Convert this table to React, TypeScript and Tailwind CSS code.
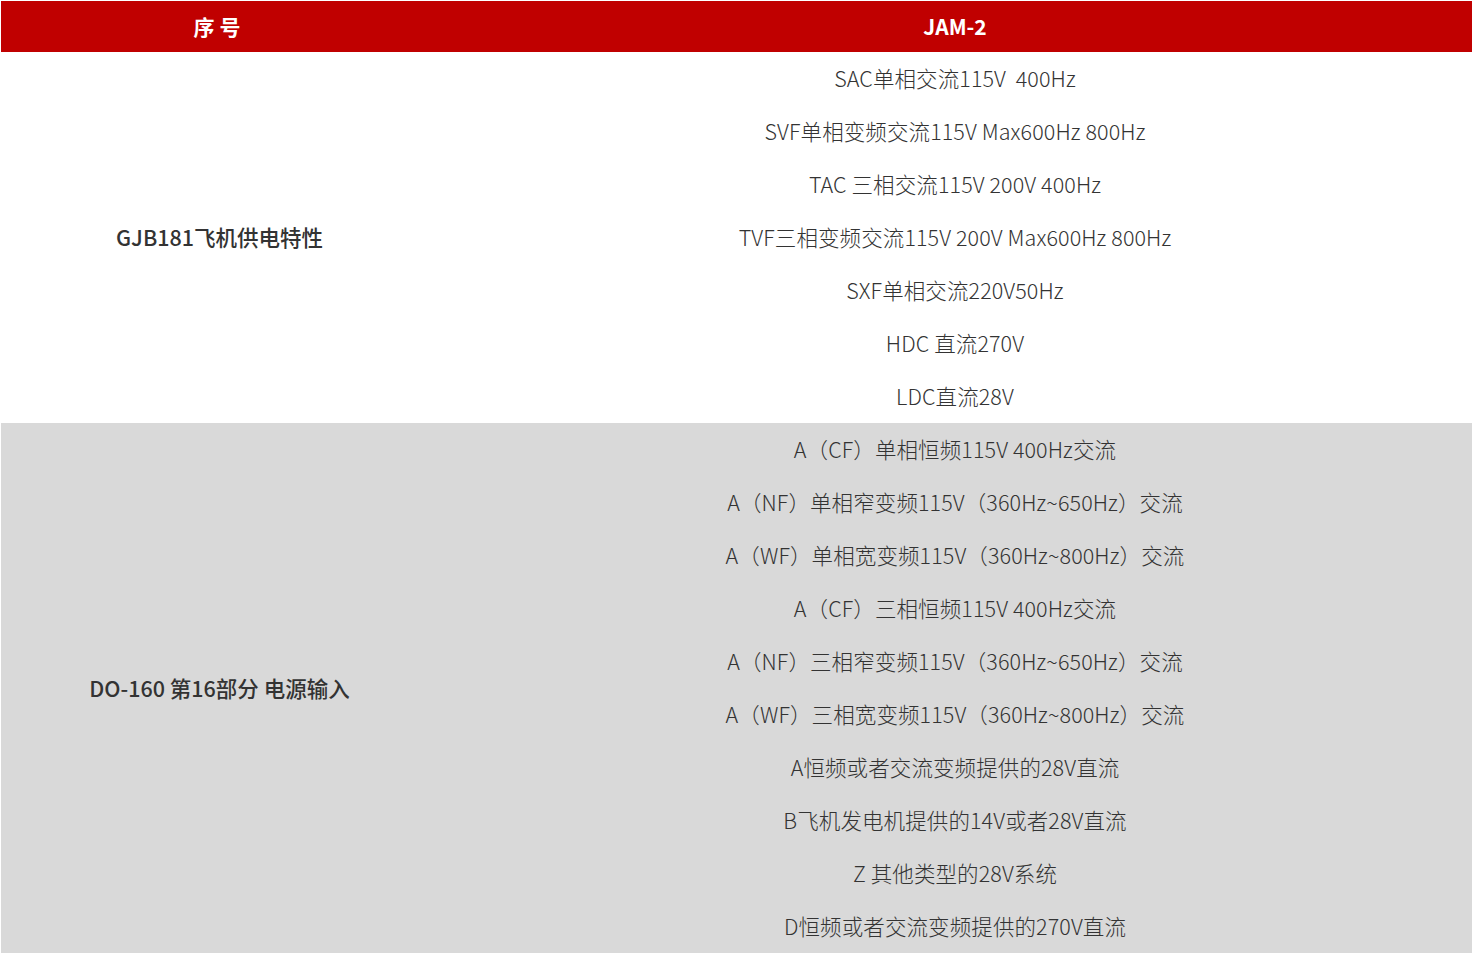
const gjb = [
  "SAC单相交流115V  400Hz",
  "SVF单相变频交流115V Max600Hz 800Hz",
  "TAC 三相交流115V 200V 400Hz",
  "TVF三相变频交流115V 200V Max600Hz 800Hz",
  "SXF单相交流220V50Hz",
  "HDC 直流270V",
  "LDC直流28V",
];

const do160 = [
  "A（CF）单相恒频115V 400Hz交流",
  "A（NF）单相窄变频115V（360Hz~650Hz）交流",
  "A（WF）单相宽变频115V（360Hz~800Hz）交流",
  "A（CF）三相恒频115V 400Hz交流",
  "A（NF）三相窄变频115V（360Hz~650Hz）交流",
  "A（WF）三相宽变频115V（360Hz~800Hz）交流",
  "A恒频或者交流变频提供的28V直流",
  "B飞机发电机提供的14V或者28V直流",
  "Z 其他类型的28V系统",
  "D恒频或者交流变频提供的270V直流",
];

function Group({
  title,
  items,
  shade,
}: {
  title: string;
  items: string[];
  shade: string;
}) {
  return (
    <>
      {items.map((item, i) => (
        <tr key={item} className={shade}>
          {i === 0 && (
            <td
              rowSpan={items.length}
              className="w-[437px] text-center align-middle text-[21.5px] font-medium text-[#333333]"
            >
              {title}
            </td>
          )}
          <td className="h-[53px] whitespace-pre text-center align-middle text-[21.5px] font-light tracking-[0.1px] text-[#333333]">
            {item}
          </td>
        </tr>
      ))}
    </>
  );
}

export default function App() {
  return (
    <div
      className="min-h-screen w-[1475px] bg-white p-px"
      style={{ fontFamily: '"Noto Sans CJK SC", "Noto Sans", sans-serif' }}
    >
      <table className="w-[1471px] border-collapse">
        <thead>
          <tr className="bg-[#c00000]">
            <th className="h-[51px] w-[437px] text-center text-[21px] font-bold tracking-[5px] text-white">
              序号
            </th>
            <th className="h-[51px] text-center text-[21px] font-bold text-white">
              JAM-2
            </th>
          </tr>
        </thead>
        <tbody>
          <Group title="GJB181飞机供电特性" items={gjb} shade="bg-white" />
          <Group title="DO-160 第16部分 电源输入" items={do160} shade="bg-[#d9d9d9]" />
        </tbody>
      </table>
    </div>
  );
}
